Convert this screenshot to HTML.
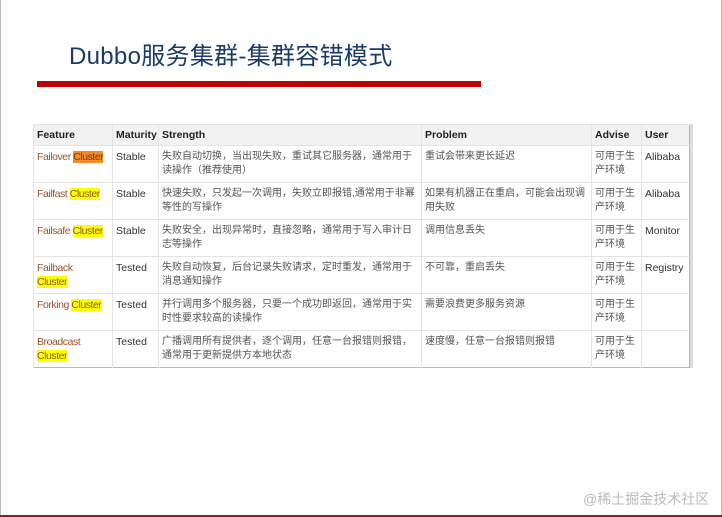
<!DOCTYPE html>
<html><head><meta charset="utf-8"><style>
body{margin:0;width:722px;height:517px;background:#fff;position:relative;overflow:hidden;font-family:"Liberation Sans","Noto Sans CJK SC",sans-serif}
.lb{position:absolute;left:0;top:0;width:1px;height:517px;background:#bbb}
.rb{position:absolute;right:0;top:0;width:1px;height:517px;background:#bbb}
.bb{position:absolute;left:0;bottom:0;width:722px;height:2px;background:#a0102a}
h1{position:absolute;left:69px;top:41px;margin:0;font-weight:normal;font-size:24px;color:#1a3a6a;letter-spacing:0.3px;line-height:32px;font-family:"Liberation Sans","Noto Sans CJK SC",sans-serif}
.red{position:absolute;left:37px;top:81px;width:444px;height:6px;background:#c00000}
table{position:absolute;left:33px;top:124px;width:656px;table-layout:fixed;border-collapse:collapse;border:1px solid #dba7a7;font-size:10.5px;color:#333;box-shadow:3px 0 0 #ddd}
td,th{border-left:1px solid #e4e4e4;border-top:1px solid #e4e4e4;vertical-align:top;padding:4px 3px;text-align:left;line-height:14px;overflow:hidden;box-sizing:border-box}
th{background:#f2f2f2;font-weight:bold;color:#222;height:21px;padding:3px 3px}
tr.r td{height:37px}
.f{color:#a0522d;font-size:10.5px;letter-spacing:-0.45px;padding-left:3px;padding-right:0}
.nw{white-space:nowrap}
.y{background:#ffff00;color:#8b5a2b}
.o{background:#f28c28;color:#7a3a10}
.cn{color:#555;font-size:10px;line-height:14px}
.wm{position:absolute;left:583px;top:489px;font-size:14px;color:#bbb}
</style></head><body>
<div class="lb"></div><div class="rb"></div><div class="bb"></div>
<h1>Dubbo服务集群-集群容错模式</h1>
<div class="red"></div>
<table>
<colgroup><col style="width:79px"><col style="width:46px"><col style="width:263px"><col style="width:170px"><col style="width:50px"><col style="width:48px"></colgroup>
<tr><th>Feature</th><th>Maturity</th><th>Strength</th><th>Problem</th><th>Advise</th><th>User</th></tr>
<tr class="r"><td class="f nw">Failover <span class="o">Cluster</span></td><td>Stable</td><td class="cn">失败自动切换，当出现失败，重试其它服务器，通常用于读操作（推荐使用）</td><td class="cn">重试会带来更长延迟</td><td class="cn">可用于生产环境</td><td>Alibaba</td></tr>
<tr class="r"><td class="f nw">Failfast <span class="y">Cluster</span></td><td>Stable</td><td class="cn">快速失败，只发起一次调用，失败立即报错,通常用于非幂等性的写操作</td><td class="cn">如果有机器正在重启，可能会出现调用失败</td><td class="cn">可用于生产环境</td><td>Alibaba</td></tr>
<tr class="r"><td class="f nw">Failsafe <span class="y">Cluster</span></td><td>Stable</td><td class="cn">失败安全，出现异常时，直接忽略，通常用于写入审计日志等操作</td><td class="cn">调用信息丢失</td><td class="cn">可用于生产环境</td><td>Monitor</td></tr>
<tr class="r"><td class="f">Failback<br><span class="y">Cluster</span></td><td>Tested</td><td class="cn">失败自动恢复，后台记录失败请求，定时重发，通常用于消息通知操作</td><td class="cn">不可靠，重启丢失</td><td class="cn">可用于生产环境</td><td>Registry</td></tr>
<tr class="r"><td class="f nw">Forking <span class="y">Cluster</span></td><td>Tested</td><td class="cn">并行调用多个服务器，只要一个成功即返回，通常用于实时性要求较高的读操作</td><td class="cn">需要浪费更多服务资源</td><td class="cn">可用于生产环境</td><td></td></tr>
<tr class="r"><td class="f">Broadcast<br><span class="y">Cluster</span></td><td>Tested</td><td class="cn">广播调用所有提供者，逐个调用，任意一台报错则报错，通常用于更新提供方本地状态</td><td class="cn">速度慢，任意一台报错则报错</td><td class="cn">可用于生产环境</td><td></td></tr>
</table>
<div class="wm">@稀土掘金技术社区</div>
</body></html>
